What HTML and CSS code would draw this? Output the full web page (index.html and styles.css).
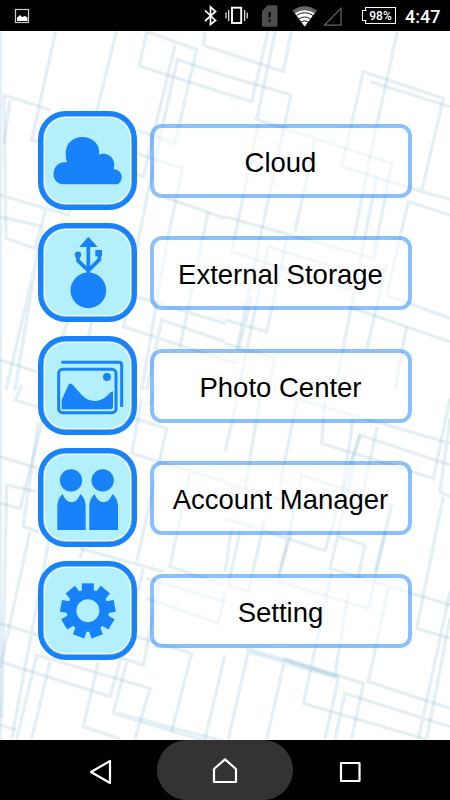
FILE: index.html
```html
<!DOCTYPE html>
<html lang="en">
<head>
    <meta charset="UTF-8">
    <meta name="viewport" content="width=device-width, initial-scale=1.0">
    <title>Home</title>
    <link rel="stylesheet" href="styles.css">
</head>
<body>

<div class="phone">
    <div class="status-bar">
        <svg class="status-picture" viewBox="0 0 16 16">
            <rect x="1.500" y="1.500" width="13" height="13" fill="none" stroke="#ccc" stroke-width="1.2"/>
            <path d="M3 13V9.500L4.500 8.500l1.500-1.500L8 9l3-1 2.500 1.500V13z" fill="#fff"/>
        </svg>
        <svg class="status-icons" viewBox="0 0 160 32">
            <!-- bluetooth -->
            <path d="M5 10.500L15.500 20.500 10.500 24.500V7L15.500 11.500 5 21" fill="none" stroke="#fff" stroke-width="1.700"/>
            <!-- vibrate -->
            <rect x="32" y="7.700" width="9.200" height="15.300" fill="none" stroke="#fff" stroke-width="1.900"/>
            <path d="M28.700 10v11M26 12.500v6M44.600 10v11M47.200 12.500v6" stroke="#ddd" stroke-width="1.300"/>
            <!-- sim -->
            <path d="M62 11l5.500-5.700H76q1.500 0 1.500 1.500v18.500q0 1.500-1.500 1.500H63.500q-1.500 0-1.500-1.500z" fill="#4d4d4d"/>
            <path d="M69.600 12v5.500M69.600 19.500v2.200" stroke="#000" stroke-width="2"/>
            <!-- wifi -->
            <path d="M92.500 10.500Q104.500 2 117 10.500L104.700 26.500z" fill="#666"/>
            <path d="M95 13.300Q104.500 7 114.500 13.300L104.700 26.500z" fill="#fff"/>
            <path d="M96.500 15.300Q104.700 10.200 113 15.300M99 18.800Q104.700 15.200 110.300 18.800M101.300 21.800Q104.700 19.800 108 21.800" fill="none" stroke="#000" stroke-width=".9"/>
            <!-- signal -->
            <path d="M141 8.200V25.200H124.500z" fill="none" stroke="#666" stroke-width="1.200"/>
        </svg>
        <div class="battery">98%</div>
        <div class="clock">4:47</div>
    </div>

    <div class="content">
        <!-- tilted frames behind the menu -->
        <svg class="pattern" viewBox="0 0 1350 2127" preserveAspectRatio="none">
            <path d="M1 0V2127"/>
            <g transform="translate(0 -3)">
                <path d="M168 0L95 330 115 335M350 0L290 245M440 5L418 108 675 190"/>
                <path d="M440 5L590 58 525 340 410 300M615 5L610 45 675 67"/>
                <path d="M525 45L430 440 400 430M675 137L532 88 440 505"/>
                <path d="M150 240L12 195 18 625 105 655 140 530M0 495L205 555 215 530M0 990L110 1025"/>
                <path d="M30 210L12 340M0 560L130 590M130 600L18 1080M115 655L45 1080M205 870L185 925M275 870L265 925"/>
                <path d="M410 370L548 415 500 640M625 545L540 950M410 800L675 880"/>
                <path d="M490 500L675 565M440 505L375 830M380 850L370 890 675 990M675 935L485 870 440 1080"/>
                <path d="M500 640L425 1080"/>
            </g>
            <g transform="translate(675 -3)">
                <path d="M0 67L175 125 200 0M0 137L198 195 110 600 35 960"/>
                <path d="M0 190L80 215 130 0M518 0L430 400"/>
                <path d="M152 0L95 268 500 400 445 685 0 560M270 330L210 605"/>
                <path d="M415 125L655 205 590 485 350 410zM590 485L675 508"/>
                <path d="M435 155L675 230M675 555L550 515 485 795 675 865"/>
                <path d="M100 280L20 665 380 780M430 410L385 630M485 700L425 960"/>
                <path d="M455 440L330 1080M130 650L390 730M545 890L510 1080"/>
                <path d="M130 650L40 1080M370 830L675 935M0 940L150 985 130 1080"/>
                <path d="M0 870L125 905 185 630M80 800L40 960M0 990L35 1000"/>
            </g>
            <g transform="translate(0 1062)">
                <path d="M65 0L45 45 110 65M0 215L115 250M110 320L20 300 5 1000"/>
                <path d="M130 100L60 370 0 355M150 450L35 1062M0 715L330 820"/>
                <path d="M115 110L70 425 115 440M90 440L0 850M0 830L330 935 370 790"/>
                <path d="M50 1062L110 810 450 910 405 1062M0 1020L50 1035"/>
                <path d="M150 830L95 1062M295 830L250 1025 360 1062M410 755L575 805 515 1040"/>
                <path d="M675 1070L355 985M675 1085L340 985 380 830M430 550L370 820 430 840 480 580"/>
                <path d="M385 95L500 130 410 530M240 490L490 560M440 580L675 650"/>
                <path d="M425 40L395 205 675 290M570 260L510 545 675 600M440 640L655 715 675 620"/>
                <path d="M675 810L615 1062M470 0L450 60M250 490L240 520"/>
            </g>
            <g transform="translate(675 1062)">
                <path d="M35 50L0 200M105 40L60 310M215 50L165 300M300 40L290 175 625 280 675 40"/>
                <path d="M210 40L675 175M457 125L405 360M675 100L645 320 675 335"/>
                <path d="M675 240L405 150 375 240M385 100L345 360M655 335L575 730 675 760"/>
                <path d="M230 270L500 360 430 670 160 590zM0 400L300 497 405 150"/>
                <path d="M0 295L300 380M340 455L420 480 400 575M45 440L10 600 70 620 120 400"/>
                <path d="M390 230L315 550 675 660M200 440L160 570M20 430L0 560M500 360L450 560"/>
                <path d="M10 1062L70 800 340 880 300 1062M125 1062L180 820 415 895 380 1062"/>
                <path d="M65 790L340 875M320 560L235 955 600 1062M490 610L430 890 675 970"/>
                <path d="M370 620L330 870M675 1025L360 925 330 1062M675 620L580 1062"/>
                <path d="M675 700L605 1062M180 825L340 875"/>
            </g>
        </svg>

        <div class="menu">
            <div class="menu-row">
                <div class="menu-icon">
                    <svg viewBox="0 0 297 297">
                        <path d="M74 220C34 216 40 155 78 154H87C74 107 97 78 134 78C169 79 188 105 183 131C207 120 237 141 227 174C252 176 261 206 239 220z"/>
                    </svg>
                </div>
                <div class="menu-button">Cloud</div>
            </div>
            <div class="menu-row">
                <div class="menu-icon">
                    <svg viewBox="0 0 297 297">
                        <circle cx="151" cy="202" r="53.500"/>
                        <path d="M151 41L179 72H124zM172 81h20v19h-20z"/>
                        <circle cx="120" cy="95" r="9.500"/>
                        <path class="line usb-line" d="M151 65V155M120 96V113L151 143M184 90V110L151 143"/>
                    </svg>
                </div>
                <div class="menu-button">External Storage</div>
            </div>
            <div class="menu-row">
                <div class="menu-icon">
                    <svg viewBox="0 0 297 297">
                        <path class="line" d="M70 79H242Q251 79 251 87V213"/>
                        <rect class="line" x="62" y="100" width="172" height="130" rx="12"/>
                        <circle cx="207" cy="123" r="12"/>
                        <path d="M71 220V192L91 147Q98 137 105 148L132 178C155 204 193 197 210 176Q218 167 225 166V211Q225 220 217 220z"/>
                    </svg>
                </div>
                <div class="menu-button">Photo Center</div>
            </div>
            <div class="menu-row">
                <div class="menu-icon">
                    <svg viewBox="0 0 297 297">
                        <circle cx="99" cy="97" r="33.500"/>
                        <circle cx="194" cy="97" r="33.500"/>
                        <path d="M58 246V174Q59 150 74 138C86 171 115 171 127 138Q142 150 143 174V246zM154 246V174Q155 150 170 138C182 171 211 171 223 138Q239 150 240 174V246z"/>
                    </svg>
                </div>
                <div class="menu-button">Account Manager</div>
            </div>
            <div class="menu-row">
                <div class="menu-icon">
                    <svg viewBox="0 0 297 297">
                        <g transform="translate(149.500 149)">
                            <circle class="gear-ring" r="49"/>
                            <path id="tooth" d="M-18-60V-82H18V-60z"/>
                            <use href="#tooth" transform="rotate(40)"/>
                            <use href="#tooth" transform="rotate(80)"/>
                            <use href="#tooth" transform="rotate(120)"/>
                            <use href="#tooth" transform="rotate(160)"/>
                            <use href="#tooth" transform="rotate(200)"/>
                            <use href="#tooth" transform="rotate(240)"/>
                            <use href="#tooth" transform="rotate(280)"/>
                            <use href="#tooth" transform="rotate(320)"/>
                        </g>
                    </svg>
                </div>
                <div class="menu-button">Setting</div>
            </div>
        </div>
    </div>

    <div class="nav-bar">
        <div class="nav-item">
            <svg viewBox="0 0 28 28"><path d="M24 3V25L5 14z"/></svg>
        </div>
        <div class="nav-item nav-home">
            <svg viewBox="0 0 28 28"><path d="M3 25V12L14 2.300 25 12V25z"/></svg>
        </div>
        <div class="nav-item">
            <svg viewBox="0 0 28 28"><path d="M4 5H22.500V23H4z"/></svg>
        </div>
    </div>
</div>

</body>
</html>
```
FILE: styles.css
```css
body, html {
    margin: 0;
    padding: 0;
    height: 100%;
    background-color: #000;
}

.phone {
    width: 450px;
    height: 800px;
    display: flex;
    flex-direction: column;
    overflow: hidden;
}

.status-bar {
    height: 31px;
    display: flex;
    align-items: center;
    color: #fff;
    font-family: Roboto, sans-serif;
}

.status-picture {
    width: 16px;
    height: 16px;
    margin-left: 14px;
}

.status-icons {
    width: 160px;
    height: 32px;
    margin-left: 170px;
}

.battery {
    box-sizing: border-box;
    position: relative;
    width: 31px;
    height: 17px;
    margin-left: 5px;
    border: 1px solid #fff;
    font-size: 12px;
    font-weight: 500;
    line-height: 16px;
    text-align: center;
}

/* battery tip */
.battery::before {
    content: "";
    position: absolute;
    left: -4px;
    top: 2px;
    width: 3px;
    height: 9px;
    border: 1px solid #fff;
    border-right-color: #000;
    background-color: #000;
}

.clock {
    margin-left: 9px;
    padding-top: 2px;
    font-size: 18px;
    font-weight: 500;
}

.content {
    position: relative;
    height: 709px;
    background-color: #fff;
}

.pattern {
    position: absolute;
    top: 0;
    left: 0;
    width: 450px;
    height: 709px;
    fill: none;
    stroke: #9cc4dd;
    stroke-opacity: 0.27;
    stroke-width: 10;
    filter: blur(0.6px);
}

.menu {
    position: relative;
    display: flex;
    flex-direction: column;
    gap: 13.5px;
    padding: 79.5px 37.5px 0;
}

.menu-row {
    display: flex;
    align-items: center;
    gap: 13px;
    height: 99px;
}

.menu-icon {
    box-sizing: border-box;
    flex: none;
    width: 99px;
    height: 99px;
    border: 5px solid #1882fa;
    border-radius: 28px;
    background-color: #b4f0fc;
    box-shadow: inset 0 0 0 0.5px #1882fa, inset 0 0 0 2px #f4fae6;
}

.menu-icon svg {
    display: block;
    width: 99px;
    height: 99px;
    margin: -5px;
    fill: #1882fa;
}

.menu-icon .line {
    fill: none;
    stroke: #1882fa;
    stroke-width: 9;
}

.menu-icon .usb-line {
    stroke-width: 11;
}

.gear-ring {
    fill: none;
    stroke: #1882fa;
    stroke-width: 29;
}

.menu-button {
    box-sizing: border-box;
    width: 262px;
    height: 74px;
    margin-top: 1px;
    border: 4px solid rgba(24, 130, 250, 0.5);
    border-radius: 12px;
    background-color: rgba(255, 255, 255, 0.5);
    background-clip: padding-box;
    color: #000;
    font-family: "Liberation Sans", Arial, sans-serif;
    font-size: 27.5px;
    line-height: 69px;
    text-align: center;
}

.nav-bar {
    height: 60px;
    display: flex;
    align-items: center;
    justify-content: center;
}

.nav-item {
    display: flex;
    align-items: center;
    justify-content: center;
    width: 115px;
    height: 60px;
}

.nav-item svg {
    width: 28px;
    height: 28px;
    margin-top: 4px;
    fill: none;
    stroke: #fff;
    stroke-width: 2.2;
    stroke-linejoin: round;
}

.nav-home {
    width: 136px;
    border-radius: 30px;
    background-color: #333;
}

.nav-home svg {
    margin-top: 2px;
}
```
